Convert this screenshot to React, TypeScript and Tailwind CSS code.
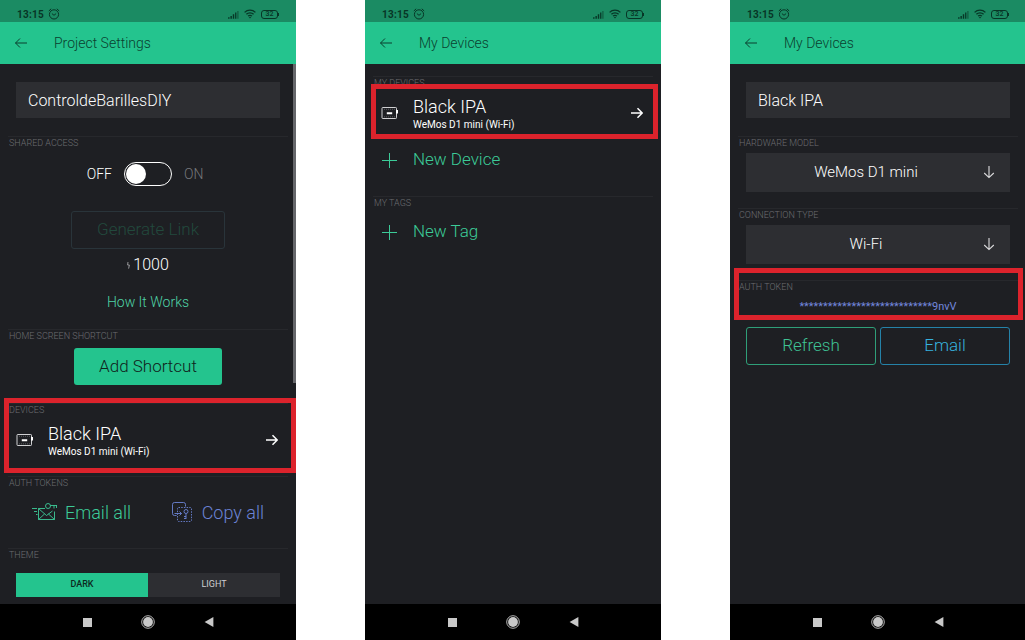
import { useState } from "react";
import type { ReactNode } from "react";

function StatusBar() {
  return (
    <div className="flex h-[22px] items-end justify-between bg-[#1b8b63] px-[17px] text-[#073626]">
      <div className="flex h-4 items-center gap-1">
        <span className="text-[10px] font-bold tracking-wide">13:15</span>
        <svg viewBox="0 0 12 12" className="size-3" fill="none" stroke="currentColor" strokeWidth="1">
          <circle cx="6" cy="6.4" r="4.6" />
          <path d="M.8 3 3.2.8M11.200 3 8.800.8M3.900 5.600 6 7.300 8.100 5.600" />
        </svg>
      </div>
      <div className="flex h-4 items-center gap-[5px]">
        <svg viewBox="0 0 12 10" className="h-[9px] w-[11px]" fill="currentColor">
          <path d="M0 8h1.6v1.6H0zM2.6 6.6h1.6v3H2.6zM5.2 4.8h1.6v4.8H5.2zM7.8 2.8h1.4v6.8H7.8z" />
          <path d="M10.2 1h1.4v8.6h-1.4z" opacity="0.55" />
        </svg>
        <svg viewBox="0 0 12 10" className="h-[10px] w-3" fill="none" stroke="currentColor" strokeWidth="1.3">
          <path d="M.6 3.4C3.6.4 8.4.4 11.4 3.4M2.4 5.3c2-2 5.2-2 7.2 0M4.1 7.1c1.1-1.1 2.7-1.1 3.8 0" />
          <path d="M4.9 8 6 9.4 7.1 8z" fill="currentColor" stroke="none" />
        </svg>
        <div className="flex items-center">
          <span className="flex h-[9px] w-[17px] items-center justify-center rounded-[3px] border border-current text-[7px] leading-none font-medium">
            32
          </span>
          <span className="h-[3px] w-px bg-current" />
        </div>
      </div>
    </div>
  );
}

function AppBar({ title }: { title: string }) {
  return (
    <header className="flex h-[42px] items-center gap-[26px] bg-[#24c48e] px-[14px] text-[#0b3f2e]">
      <button type="button" aria-label="Back">
        <svg viewBox="0 0 14 14" className="size-[14px]" fill="none" stroke="currentColor" strokeWidth="1">
          <path d="M13 7H1.5M6 2.5 1.5 7 6 11.5" />
        </svg>
      </button>
      <h1 className="text-[14px] font-light">{title}</h1>
    </header>
  );
}

function NavBar() {
  return (
    <nav className="flex h-9 items-center justify-center gap-[47px] bg-black text-[#c9c9c9]">
      <button type="button" aria-label="Recent apps" className="flex w-[14px] justify-center">
        <span className="size-[9px] bg-current" />
      </button>
      <button type="button" aria-label="Home">
        <svg viewBox="0 0 14 14" className="size-[14px]" fill="currentColor">
          <circle cx="7" cy="7" r="4.9" />
          <circle cx="7" cy="7" r="6.3" fill="none" stroke="currentColor" strokeWidth="0.9" />
        </svg>
      </button>
      <button type="button" aria-label="Back" className="flex w-[14px] justify-center">
        <svg viewBox="0 0 10 10" className="size-[10px]" fill="currentColor">
          <path d="M9.4 0v10L.6 5z" />
        </svg>
      </button>
    </nav>
  );
}

function Phone({ title, children }: { title: string; children: ReactNode }) {
  return (
    <section className="flex min-h-screen flex-col bg-[#1e1f23] text-white">
      <StatusBar />
      <AppBar title={title} />
      <div className="relative flex-1 px-2">{children}</div>
      <NavBar />
    </section>
  );
}

function SectionLabel({ children }: { children: ReactNode }) {
  return (
    <h2 className="border-t border-[#27282c] pl-px text-[9px] leading-3 font-light text-[#6c6d71]">
      {children}
    </h2>
  );
}

function NameField({ label, value }: { label: string; value: string }) {
  return (
    <div className="px-2 pt-[18px]">
      <input
        type="text"
        aria-label={label}
        defaultValue={value}
        className="h-9 w-full bg-[#2d2e32] px-3 text-[16px] font-light outline-none"
      />
    </div>
  );
}

function DeviceRow() {
  return (
    <button type="button" className="flex h-12 w-full items-center gap-[14px] pr-[10px] pl-2 text-left">
      <svg viewBox="0 0 18 14" className="h-[14px] w-[18px]" fill="none" stroke="#e4e4e6">
        <rect x="1" y="1.5" width="14.5" height="11" rx="0.8" strokeWidth="0.9" />
        <path d="M3 3.3h11M3 10.8h11" strokeWidth="0.6" strokeDasharray="1 1" opacity="0.5" />
        <path d="M5.8 7.2h5.400M16 4v3.400" stroke="#fff" strokeWidth="2" />
      </svg>
      <span className="flex-1 pt-[3px]">
        <span className="block text-[18px] leading-5 font-light">Black IPA</span>
        <span className="block text-[10px] leading-4">WeMos D1 mini (Wi-Fi)</span>
      </span>
      <svg viewBox="0 0 12 12" className="size-3" fill="none" stroke="currentColor" strokeWidth="1.5">
        <path d="M0 6h11M6.5 1.2 11.2 6l-4.7 4.8" />
      </svg>
    </button>
  );
}

function AddRow({ label }: { label: string }) {
  return (
    <button type="button" className="flex h-[38px] w-full items-center gap-4 pl-2 text-[17px] font-light text-[#3ccb98]">
      <svg viewBox="0 0 16 16" className="size-4" fill="none" stroke="currentColor" strokeWidth="1">
        <path d="M8.5 1v15M1 8.5h15" />
      </svg>
      {label}
    </button>
  );
}

function SelectField({ label, value }: { label: string; value: string }) {
  return (
    <div className="relative mx-2 mt-1">
      <select
        aria-label={label}
        defaultValue={value}
        className="h-[39px] w-full appearance-none bg-[#2d2e32] pr-6 text-center text-[15px] font-light [text-align-last:center]"
      >
        <option>{value}</option>
      </select>
      <svg
        viewBox="0 0 12 14"
        className="pointer-events-none absolute top-3 right-[15px] h-[14px] w-3"
        fill="none"
        stroke="#dcdcde"
        strokeWidth="1.1"
      >
        <path d="M6 1v11.5M1.2 8 6 12.6 10.8 8" />
      </svg>
    </div>
  );
}

function ProjectSettings() {
  const [theme, setTheme] = useState("DARK");

  return (
    <Phone title="Project Settings">
      <div className="absolute top-0 right-0 h-[59%] w-[3px] bg-[#66676b]" />
      <NameField label="Project name" value="ControldeBarillesDIY" />

      <div className="mt-[18px] flex flex-col items-center">
        <div className="w-full">
          <SectionLabel>SHARED ACCESS</SectionLabel>
        </div>
        <label className="mt-[13px] flex items-center gap-3 text-[14px] leading-6 font-light">
          <span className="w-7 text-right">OFF</span>
          <input
            type="checkbox"
            role="switch"
            className="flex h-6 w-12 appearance-none items-center rounded-full border border-white px-px before:size-5 before:rounded-full before:bg-white checked:justify-end"
          />
          <span className="w-7 text-[#77787c]">ON</span>
        </label>
        <button
          type="button"
          disabled
          className="mt-[25px] h-[38px] w-[154px] rounded-[3px] border border-[#29343a] text-[17px] font-light text-[#22493d]"
        >
          Generate Link
        </button>
        <p className="mt-1.5 flex items-center gap-[3px] text-[16px] leading-5 font-light">
          <svg viewBox="0 0 3 7" className="h-[7px] w-[3px]" fill="none" stroke="#b5b5b8" strokeWidth="0.8">
            <path d="M1 0 .6 3h1.8L1.6 6.6" />
          </svg>
          1000
        </p>
        <a href="#how-it-works" className="mt-[17px] text-[14px] leading-5 font-light text-[#4fd3a6]">
          How It Works
        </a>
      </div>

      <div className="mt-[17px]">
        <SectionLabel>HOME SCREEN SHORTCUT</SectionLabel>
        <button
          type="button"
          className="mx-auto mt-1.5 block h-[37px] w-[148px] rounded-[3px] bg-[#24c48e] text-[17px] font-light text-[#10231c]"
        >
          Add Shortcut
        </button>
      </div>

      <div className="relative mt-[18px] pb-3">
        <SectionLabel>DEVICES</SectionLabel>
        <DeviceRow />
        <div className="pointer-events-none absolute -top-[5px] -right-2 bottom-[3px] -left-1 border-[5px] border-[#dc232c]" />
      </div>

      <SectionLabel>AUTH TOKENS</SectionLabel>
      <div className="flex h-[46px] items-center justify-between pr-6 pl-6 text-[18px] font-light">
        <button type="button" className="flex items-center gap-2 text-[#3ccb98]">
          <svg viewBox="0 0 25 20" className="h-5 w-[25px]" fill="none" stroke="currentColor" strokeWidth="0.9">
            <path d="M13 6.5H6.5v11h16v-8M6.5 17.5l6-5.5M22.5 17.5l-6-5.5M6.5 6.5l8 7 6-4.5" />
            <path d="M0 6.5h5M2 9.5h3M4 12.5h1.5" />
            <circle cx="16" cy="4" r="2.5" />
            <path d="M18.5 3.5H25M22 3.5v3M24.5 3.5V6" />
          </svg>
          Email all
        </button>
        <button type="button" className="flex items-center gap-[10px] text-[#6b83d6]">
          <svg viewBox="0 0 20 20" className="size-5" fill="none" stroke="currentColor" strokeWidth="0.9">
            <path d="M4.5 13.5h-2a2 2 0 0 1-2-2v-9a2 2 0 0 1 2-2h9a2 2 0 0 1 2 2v2" />
            <rect x="5.5" y="5.5" width="14" height="14" rx="1" strokeDasharray="1.5 1.2" />
            <path d="M2.5 11.5h7M7.5 9.5l2 2-2 2" />
            <circle cx="14" cy="9.5" r="2" />
            <path d="M14 11.5V17M14 14.5h-2M14 16.5h-2" />
          </svg>
          Copy all
        </button>
      </div>

      <div className="mt-[13px] pb-[7px]">
        <SectionLabel>THEME</SectionLabel>
        <div className="mx-2 mt-3 grid grid-cols-2">
          {["DARK", "LIGHT"].map((name) => (
            <button
              key={name}
              type="button"
              aria-pressed={theme === name}
              onClick={() => setTheme(name)}
              className={
                theme === name
                  ? "h-6 bg-[#24c48e] text-[9px] font-medium text-[#0c2a1f]"
                  : "h-6 bg-[#2d2e32] text-[9px] text-[#cfcfd1]"
              }
            >
              {name}
            </button>
          ))}
        </div>
      </div>
    </Phone>
  );
}

function MyDevices() {
  return (
    <Phone title="My Devices">
      <div className="pt-3">
        <SectionLabel>MY DEVICES</SectionLabel>
        <div className="relative">
          <DeviceRow />
          <div className="pointer-events-none absolute -top-[5px] -right-[5px] -bottom-[2px] -left-[2px] border-[5px] border-[#dc232c]" />
        </div>
        <div className="mt-1">
          <AddRow label="New Device" />
        </div>
      </div>
      <div className="mt-[17px]">
        <SectionLabel>MY TAGS</SectionLabel>
        <div className="mt-1">
          <AddRow label="New Tag" />
        </div>
      </div>
    </Phone>
  );
}

function DeviceSettings() {
  return (
    <Phone title="My Devices">
      <NameField label="Device name" value="Black IPA" />
      <div className="mt-[18px]">
        <SectionLabel>HARDWARE MODEL</SectionLabel>
        <SelectField label="Hardware model" value="WeMos D1 mini" />
      </div>
      <div className="mt-4">
        <SectionLabel>CONNECTION TYPE</SectionLabel>
        <SelectField label="Connection type" value="Wi-Fi" />
      </div>
      <div className="relative mt-4">
        <SectionLabel>AUTH TOKEN</SectionLabel>
        <p className="mt-1 text-center text-[11px] leading-5 text-[#7286dc]">****************************9nvV</p>
        <div className="pointer-events-none absolute -top-3 -right-[5px] -bottom-[3px] -left-1 border-[5px] border-[#dc232c]" />
      </div>
      <div className="mx-2 mt-[10px] grid grid-cols-2 gap-1 text-[17px] font-light">
        <button type="button" className="h-[38px] rounded-[3px] border border-[#2f9f79] text-[#3fc294]">
          Refresh
        </button>
        <button type="button" className="h-[38px] rounded-[3px] border border-[#2582a8] text-[#36b1de]">
          Email
        </button>
      </div>
    </Phone>
  );
}

export default function App() {
  return (
    <div className="overflow-hidden bg-white">
      <main className="-mr-px grid min-h-screen grid-cols-3 gap-x-[69px] font-['Roboto','Liberation_Sans',sans-serif]">
        <ProjectSettings />
        <MyDevices />
        <DeviceSettings />
      </main>
    </div>
  );
}
